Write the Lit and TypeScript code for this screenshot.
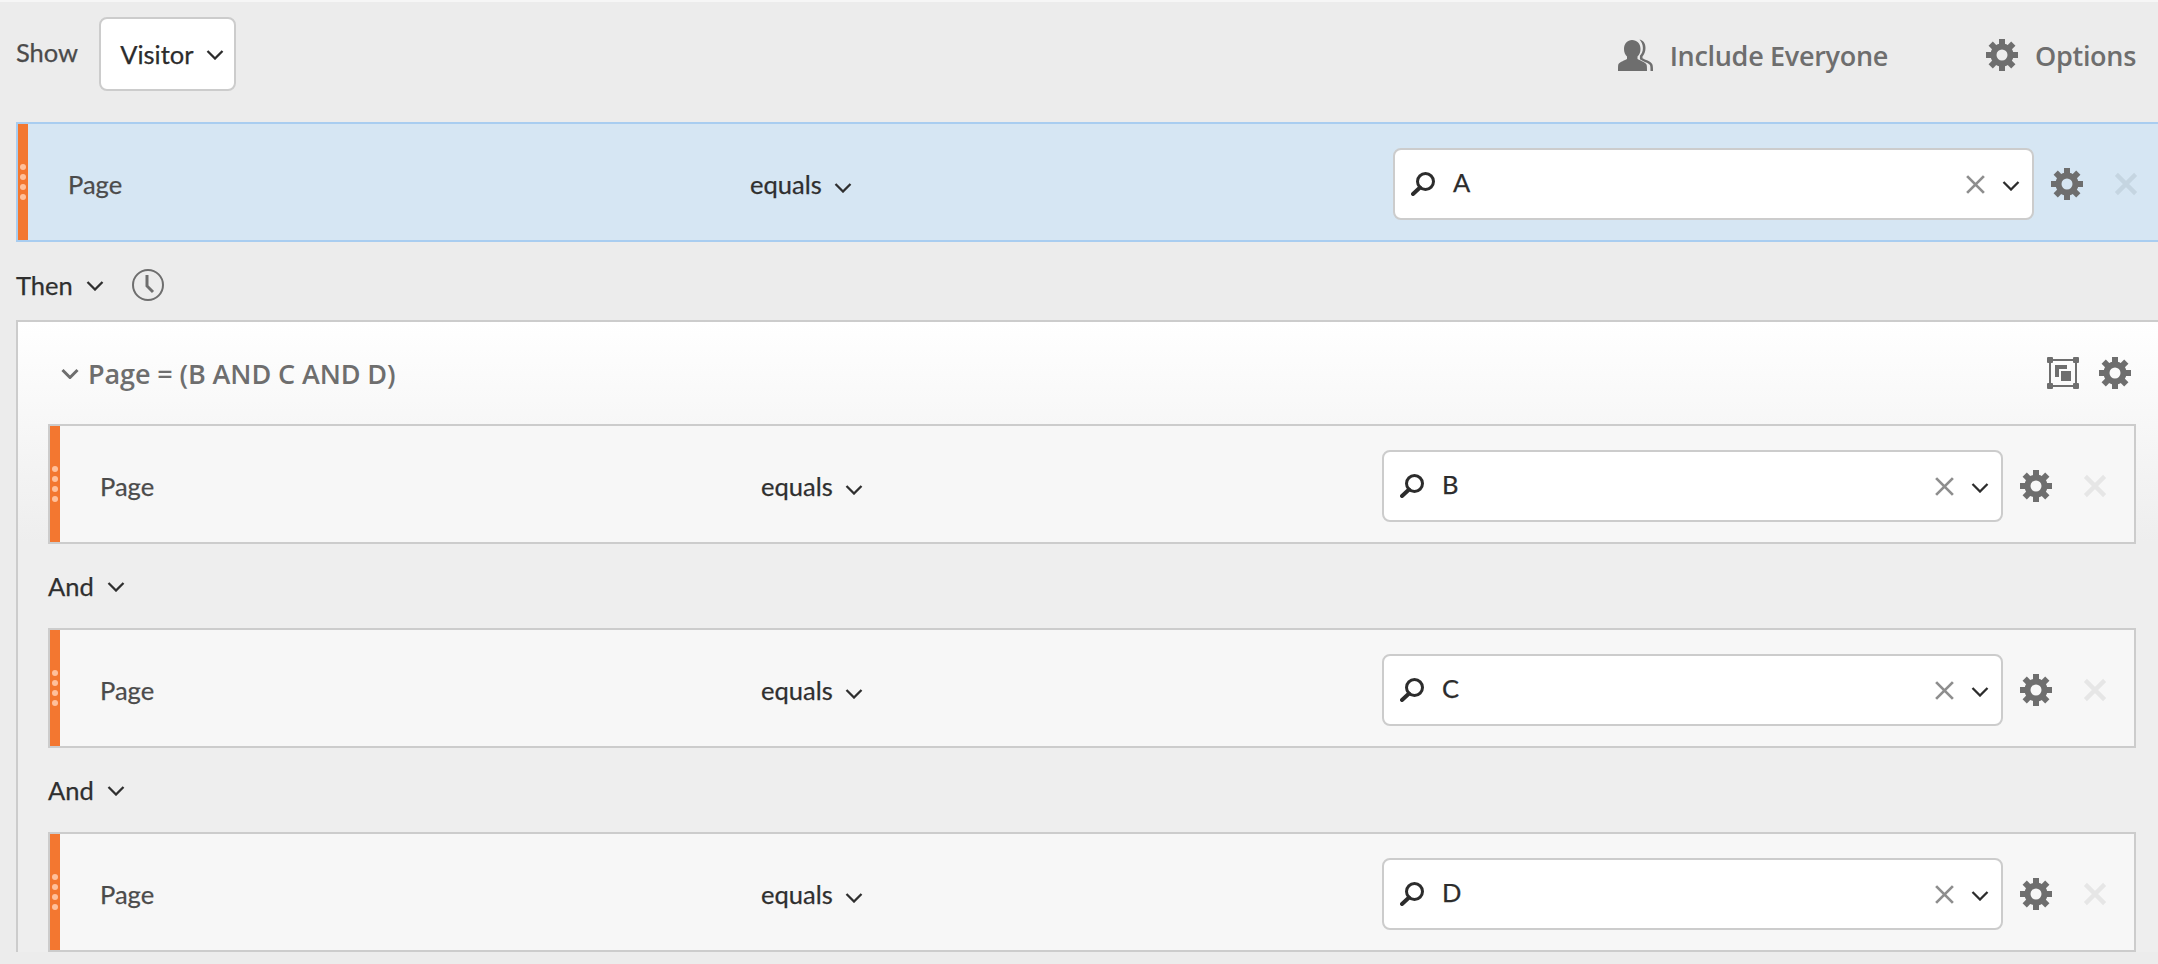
import { LitElement, html, css, svg } from 'lit';
import { customElement, property } from 'lit/decorators.js';

const gearTeeth = [0, 45, 90, 135, 180, 225, 270, 315];

const gearIcon = html`<svg class="gear" viewBox="0 0 32 32" width="32" height="32">
  ${gearTeeth.map(a => svg`<rect x="13" y="0" width="6" height="7" transform="rotate(${a} 16 16)" />`)}
  <path fill-rule="evenodd" d="M16 4.5a11.5 11.5 0 1 0 0 23a11.5 11.5 0 1 0 0-23zM16 10.5a5.5 5.5 0 1 1 0 11a5.5 5.5 0 1 1 0-11z" />
</svg>`;

const chevron = html`<svg class="chevron" viewBox="0 0 18 11" width="18" height="11">
  <path d="M1.500 2l7.500 7.500l7.500-7.500" fill="none" stroke="currentColor" stroke-width="2.300" />
</svg>`;

const crossIcon = (size: number, width: number, cls: string) => html`<svg class=${cls} viewBox="0 0 20 20" width=${size} height=${size}>
  <path d="M2 2L18 18M18 2L2 18" fill="none" stroke="currentColor" stroke-width=${width} />
</svg>`;

const searchIcon = html`<svg class="search" viewBox="0 0 24 24" width="24" height="24">
  <circle cx="14.5" cy="9.5" r="8" fill="none" stroke="currentColor" stroke-width="3" />
  <path d="M9 15.5L2 22" fill="none" stroke="currentColor" stroke-width="4" stroke-linecap="round" />
</svg>`;

const peopleIcon = html`<svg class="people" viewBox="0 0 36 32" width="36" height="32">
  <path d="M14 1c-4.500 0-8 3.500-8 9c0 3 1 5.500 3 7.500v2.500c-2 1.500-7 2.500-8.500 5c-.5 1-.5 3.500-.5 7h29c0-3.500 0-6-.8-7c-1.700-2.500-6.700-3.500-8.700-5v-2.500c2-2 3-4.500 3-7.500c0-5.500-3.500-9-8.500-9z" />
  <path d="M21 .5c4.500.5 6.500 4 6.500 8.500c0 3.500-1.200 6.500-3 8.500v1.800c2.500 1.700 8 2.700 9.700 5.700c.8 1.500.8 4.500.8 7.500h-2.500c0-3 0-5.500-.6-6.500c-1.400-2.400-7-3.400-10-5.800v-3.500c2-2 3-4.500 3-7.700c0-3.500-1.500-6.500-3.400-8.500z" />
</svg>`;

const clockIcon = html`<svg class="clock" viewBox="0 0 32 32" width="32" height="32">
  <circle cx="16" cy="16" r="15" fill="none" stroke="currentColor" stroke-width="2" />
  <path d="M15 6v11l6 6" fill="none" stroke="currentColor" stroke-width="3" />
</svg>`;

const groupIcon = html`<svg class="group" viewBox="0 0 32 32" width="32" height="32">
  <rect x="3" y="3" width="26" height="26" fill="none" stroke="currentColor" stroke-width="2" />
  <rect x="0" y="0" width="6" height="6" rx="1" />
  <rect x="26" y="0" width="6" height="6" rx="1" />
  <rect x="0" y="26" width="6" height="6" rx="1" />
  <rect x="26" y="26" width="6" height="6" rx="1" />
  <path d="M8 8h12v4h-8v8h-4z" />
  <rect x="14" y="14" width="10" height="10" />
</svg>`;

@customElement('filter-row')
export class FilterRow extends LitElement {
  @property({ type: String }) value = '';

  @property({ type: Boolean, reflect: true }) selected = false;

  static styles = css`
    :host {
      display: flex;
      align-items: center;
      height: 120px;
      box-sizing: border-box;
      border: 2px solid #cccccc;
      background: #f7f7f7;
      color: #4b4b4b;
      --delete: #e6e6e6;
      --field: 661px;
      --operator: 621px;
      --input: 621px;
    }

    :host([selected]) {
      margin-left: 16px;
      border-color: #a9cdf0;
      border-right: none;
      background: #d6e6f3;
      --delete: #c5d5e1;
      --field: 682px;
      --operator: 643px;
      --input: 641px;
    }

    .handle {
      flex: none;
      align-self: stretch;
      width: 10px;
      margin-right: 40px;
      display: flex;
      flex-direction: column;
      align-items: center;
      justify-content: center;
      gap: 4px;
      background: #f37730;
    }

    .handle span {
      width: 6px;
      height: 6px;
      border-radius: 50%;
      background: #ffc09b;
    }

    .field,
    .operator,
    .input,
    .gear,
    .delete {
      margin-top: 4px;
    }

    .field {
      flex: none;
      width: var(--field);
    }

    .operator {
      flex: none;
      width: var(--operator);
      display: flex;
      align-items: center;
      gap: 12px;
      color: #2f2f2f;
    }

    .operator .chevron {
      position: relative;
      top: 3px;
    }

    .input {
      flex: none;
      width: var(--input);
      height: 72px;
      box-sizing: border-box;
      display: flex;
      align-items: center;
      padding: 0 12px 0 16px;
      border: 2px solid #cccccc;
      border-radius: 8px;
      background: #ffffff;
      color: #2c2c2c;
    }

    .search {
      flex: none;
      margin-right: 18px;
    }

    .text {
      flex: 1;
      position: relative;
      top: -2px;
    }

    .clear {
      color: #8e8e8e;
      margin-right: 16px;
    }

    .input .chevron {
      position: relative;
      top: 1px;
    }

    .gear {
      flex: none;
      margin-left: 17px;
      fill: #6e6e6e;
    }

    .delete {
      flex: none;
      margin-left: 31px;
      color: var(--delete);
    }
  `;

  render() {
    return html`
      <div class="handle"><span></span><span></span><span></span><span></span></div>
      <div class="field">Page</div>
      <div class="operator">equals ${chevron}</div>
      <div class="input">
        ${searchIcon}
        <span class="text">${this.value}</span>
        ${crossIcon(21, 2.6, 'clear')} ${chevron}
      </div>
      ${gearIcon} ${crossIcon(24, 3.6, 'delete')}
    `;
  }
}

@customElement('app-root')
export class AppRoot extends LitElement {
  static styles = css`
    :host {
      display: block;
      height: 964px;
      overflow: hidden;
      box-sizing: border-box;
      border-top: 2px solid #f6f6f6;
      background: #ececec;
      font-family: Lato, 'Noto Sans', sans-serif;
      font-size: 25.5px;
      -webkit-text-stroke: 0.25px currentColor;
      color: #4b4b4b;
    }

    .top {
      height: 120px;
      box-sizing: border-box;
      display: flex;
      align-items: flex-start;
      padding: 15px 22px 0 16px;
    }

    .show {
      margin: 20px 21px 0 0;
    }

    .visitor {
      width: 137px;
      height: 74px;
      box-sizing: border-box;
      display: flex;
      align-items: center;
      gap: 12px;
      padding-left: 19px;
      border: 2px solid #cccccc;
      border-radius: 8px;
      background: #ffffff;
      color: #2c2c2c;
    }

    .action {
      display: flex;
      align-items: center;
      gap: 16px;
      height: 76px;
      color: #6e6e6e;
      font-family: 'Open Sans', sans-serif;
      font-size: 27px;
      font-weight: 600;
      letter-spacing: -0.3px;
      -webkit-text-stroke: 0;
      fill: #6e6e6e;
    }

    .action.include {
      margin-left: auto;
      margin-right: 98px;
    }

    .action .gear {
      margin-right: 1px;
    }

    .then {
      height: 78px;
      box-sizing: border-box;
      display: flex;
      align-items: center;
      gap: 13px;
      padding: 8px 0 0 16px;
      color: #2f2f2f;
    }

    .clock {
      margin-left: 15px;
      color: #6e6e6e;
    }

    .panel {
      margin-left: 16px;
      padding: 0 22px 0 30px;
      border: 2px solid #cccccc;
      border-right: none;
      border-bottom: none;
      background: linear-gradient(#ffffff, #eeeeee 220px);
    }

    .panel-head {
      height: 102px;
      display: flex;
      align-items: center;
      color: #6e6e6e;
      fill: #6e6e6e;
      margin-left: 12px;
    }

    .panel-head .chevron {
      margin-right: 8px;
      width: 20px;
    }

    .panel-head .chevron path {
      stroke-width: 3px;
    }

    .panel-head .title {
      flex: 1;
      font-family: 'Open Sans', sans-serif;
      font-size: 27px;
      font-weight: 600;
      letter-spacing: -0.1px;
      -webkit-text-stroke: 0;
    }

    .group {
      color: #6e6e6e;
      margin-right: 20px;
    }

    .panel-head .gear {
      margin-right: 5px;
    }

    .and {
      height: 84px;
      display: flex;
      align-items: center;
      gap: 13px;
      color: #2f2f2f;
    }
  `;

  render() {
    return html`
      <div class="top">
        <span class="show">Show</span>
        <div class="visitor">Visitor ${chevron}</div>
        <div class="action include">${peopleIcon} Include Everyone</div>
        <div class="action">${gearIcon} Options</div>
      </div>
      <filter-row selected value="A"></filter-row>
      <div class="then">Then ${chevron} ${clockIcon}</div>
      <div class="panel">
        <div class="panel-head">
          ${chevron}
          <span class="title">Page = (B AND C AND D)</span>
          ${groupIcon} ${gearIcon}
        </div>
        <filter-row value="B"></filter-row>
        <div class="and">And ${chevron}</div>
        <filter-row value="C"></filter-row>
        <div class="and">And ${chevron}</div>
        <filter-row value="D"></filter-row>
      </div>
    `;
  }
}
